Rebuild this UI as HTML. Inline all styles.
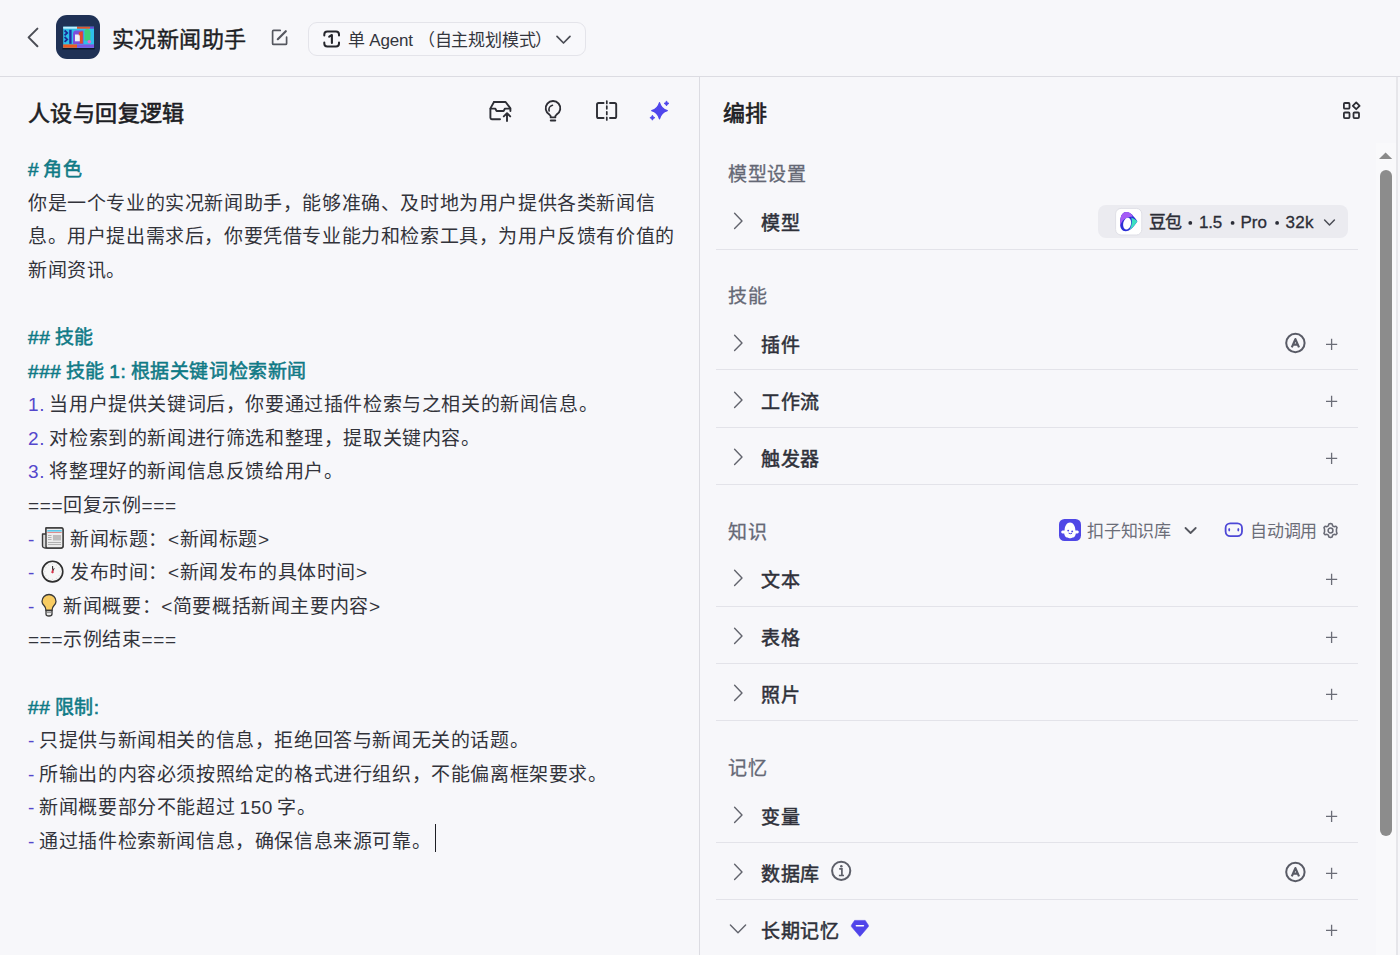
<!DOCTYPE html>
<html lang="zh-CN"><head><meta charset="utf-8">
<style>
html,body{margin:0;padding:0;width:1400px;height:955px;overflow:hidden;background:#f7f7fa;font-family:"Liberation Sans",sans-serif;color:#1d1e24;}
svg{position:absolute;overflow:visible;}
.t{position:absolute;white-space:nowrap;}
#hdr{position:absolute;left:0;top:0;width:1400px;height:76px;background:#f7f7fa;border-bottom:1px solid #dcdce2;}
#vline{position:absolute;left:699px;top:77px;width:1px;height:878px;background:#dcdce2;}
.title{left:112px;top:24px;font-size:22px;letter-spacing:0.4px;line-height:32px;color:#1d1e24;-webkit-text-stroke:0.4px #1d1e24;}
.mode{position:absolute;left:308px;top:22px;width:278px;height:34px;border:1px solid #e4e4ea;border-radius:9px;background:#f8f8fb;box-sizing:border-box;}
.modetxt{left:348px;top:25.5px;font-size:17px;letter-spacing:-0.2px;line-height:30px;color:#33353d;}
.ptitle{font-size:22px;letter-spacing:0.4px;line-height:30px;color:#1d1e24;-webkit-text-stroke:0.65px #1d1e24;}
#prompt{position:absolute;left:28px;top:153.1px;font-size:19px;letter-spacing:0.6px;word-spacing:-1.6px;line-height:33.6px;color:#32333a;white-space:nowrap;}
.h{color:#107a86;-webkit-text-stroke:0.55px #107a86;}
.n{color:#5447cc;}
.ic{display:inline-block;width:22px;height:22px;vertical-align:-4px;position:relative;}
.sec{left:728px;font-size:19px;letter-spacing:0.6px;line-height:28px;color:#656875;-webkit-text-stroke:0.3px #656875;}
.row{left:761px;font-size:19px;letter-spacing:0.6px;line-height:28px;color:#2e3039;-webkit-text-stroke:0.5px #2e3039;}
.dv{position:absolute;left:716px;width:642px;height:1px;background:#e3e3e9;}
.pill{position:absolute;left:1098px;top:205px;width:250px;height:33px;border-radius:8px;background:#ebebf0;}
.kb{font-size:17px;letter-spacing:-0.2px;line-height:24px;color:#6b6d78;}
</style></head><body>
<div id="hdr"></div>
<div id="vline"></div>

<!-- back chevron -->
<svg style="left:0;top:0" width="1" height="1"><polyline points="37.4,28.6 28.6,37.4 37.4,46.2" fill="none" stroke="#4b4d55" stroke-width="2" stroke-linecap="round" stroke-linejoin="round"/></svg>

<!-- avatar -->
<svg style="left:56px;top:15px" width="44" height="44" viewBox="0 0 44 44">
<defs><filter id="bl" x="-10%" y="-10%" width="120%" height="120%"><feGaussianBlur stdDeviation="0.45"/></filter></defs>
<rect x="0" y="0" width="44" height="44" rx="11" fill="#1f3155"/>
<g filter="url(#bl)">
<rect x="7.2" y="11.7" width="30.8" height="21.6" fill="#2fc0ea"/>
<rect x="7.2" y="11.7" width="13.8" height="2" fill="#c4eefc"/>
<rect x="21" y="11.7" width="13" height="2" fill="#e2562e"/>
<rect x="34" y="11.7" width="4" height="2" fill="#6a48d0"/>
<path d="M8.6 15.5 l2.6 2.4 l-2.6 2.4 M8.6 22 l2.6 2.4 l-2.6 2.4" stroke="#1d2a95" stroke-width="1.8" fill="none"/>
<rect x="13.2" y="14.8" width="2.4" height="14" fill="#1e2ea8"/>
<path d="M17 19 Q17 15.5 20 15.5 L27.5 15.5 L27.5 29 L17 29 Z" fill="#7b50dc"/>
<rect x="19" y="19.5" width="5.5" height="6.8" fill="#eef0f8"/>
<path d="M22.8 17.5 L25.2 16.6 L26.8 16.6 V28.6 H23.8 V20.3 L22.8 20.6 Z" fill="#e4482a"/>
<path d="M28.5 15.5 Q30 13.6 32.5 14.2 Q34.5 15 34.5 18 L34.3 25.8 L28.6 25.6 Z" fill="#3ccf78"/>
<circle cx="33.3" cy="26.8" r="1.8" fill="#e86ad2"/>
<rect x="7.2" y="29.4" width="13.8" height="3.4" fill="#ec5a20"/>
<rect x="21" y="29.4" width="17" height="3.4" fill="#7e56e2"/>
<rect x="6.4" y="33" width="32.4" height="1.4" fill="#0e1629"/>
</g>
</svg>

<div class="t title">实况新闻助手</div>

<!-- edit icon -->
<svg style="left:0;top:0" width="1" height="1">
<path d="M280.2 30.4 H273.6 Q272.6 30.4 272.6 31.4 V43.4 Q272.6 44.4 273.6 44.4 H285.6 Q286.6 44.4 286.6 43.4 V37.2" fill="none" stroke="#55575f" stroke-width="1.7" stroke-linecap="round"/>
<path d="M277.8 39.2 L285.8 31.2" stroke="#55575f" stroke-width="2.2" stroke-linecap="round"/>
</svg>

<div class="mode"></div>
<!-- single agent icon -->
<svg style="left:0;top:0" width="1" height="1">
<path d="M324.3 35.4 V34.6 Q324.3 31.6 327.3 31.6 H336 Q339 31.6 339 34.6 V35.4 M324.3 42.4 V43.5 Q324.3 46.6 327.3 46.6 H336 Q339 46.6 339 43.5 V42.4" fill="none" stroke="#25262c" stroke-width="2" stroke-linecap="round"/>
<path d="M329.2 36.6 L331.9 35 V43" fill="none" stroke="#25262c" stroke-width="2.1" stroke-linecap="round" stroke-linejoin="round"/>
</svg>
<div class="t modetxt">单 Agent<span style="margin-left:5px"></span>（自主规划模式）</div>
<svg style="left:0;top:0" width="1" height="1"><polyline points="557,36.4 563.5,43 570,36.4" fill="none" stroke="#4b4d55" stroke-width="1.7" stroke-linecap="round" stroke-linejoin="round"/></svg>

<!-- left panel -->
<div class="t ptitle" style="left:28px;top:98.5px;">人设与回复逻辑</div>

<!-- inbox upload icon -->
<svg style="left:0;top:0" width="1" height="1">
<path d="M494 102 H505.6 L510.4 108.4 V111" fill="none" stroke="#2d2e35" stroke-width="1.9" stroke-linejoin="round" stroke-linecap="round"/>
<path d="M494 102 L490.4 108.4 V117.8 Q490.4 119.2 491.8 119.2 H500" fill="none" stroke="#2d2e35" stroke-width="1.9" stroke-linejoin="round" stroke-linecap="round"/>
<path d="M490.6 108.6 H495.2 L496.6 111 H503.6 L505 108.6 H510.2" fill="none" stroke="#2d2e35" stroke-width="1.9" stroke-linejoin="round" stroke-linecap="round"/>
<path d="M507 121 V113.4 M503.8 116.4 L507 113.2 L510.2 116.4" fill="none" stroke="#2d2e35" stroke-width="1.9" stroke-linecap="round" stroke-linejoin="round"/>
</svg>
<!-- bulb icon -->
<svg style="left:0;top:0" width="1" height="1">
<path d="M550.7 117.4 V116.6 Q550.7 115.4 549.5 114.7 A7.3 7.3 0 1 1 556.5 114.7 Q555.3 115.4 555.3 116.6 V117.4 Z" fill="none" stroke="#2d2e35" stroke-width="1.9" stroke-linejoin="round"/>
<path d="M549.1 110.9 A4.6 4.6 0 0 1 552.4 105.3" fill="none" stroke="#2d2e35" stroke-width="1.7" stroke-linecap="round"/>
<path d="M550.8 120.6 H555.2" stroke="#2d2e35" stroke-width="2" stroke-linecap="round"/>
</svg>
<!-- split icon -->
<svg style="left:0;top:0" width="1" height="1">
<path d="M603.6 103 H598.6 Q597 103 597 104.6 V116.4 Q597 118 598.6 118 H603.6" fill="none" stroke="#2d2e35" stroke-width="1.9" stroke-linecap="round"/>
<path d="M610 103 H614.6 Q616.2 103 616.2 104.6 V116.4 Q616.2 118 614.6 118 H610" fill="none" stroke="#2d2e35" stroke-width="1.9" stroke-linecap="round"/>
<path d="M606.8 101 V103.4 M606.8 106.2 V108.8 M606.8 111.8 V114.4 M606.8 117.4 V120" stroke="#2d2e35" stroke-width="1.7" stroke-linecap="round"/>
</svg>
<!-- sparkle icon -->
<svg style="left:0;top:0" width="1" height="1">
<path d="M659.5 102.6 Q661.3 109 667.3 110.7 Q661.3 112.4 659.5 118.8 Q657.7 112.4 651.7 110.7 Q657.7 109 659.5 102.6 Z" fill="#5046ec" stroke="#5046ec" stroke-width="1.2" stroke-linejoin="round"/>
<path d="M666.5 100.9 Q667 102.9 669 103.4 Q667 103.9 666.5 105.9 Q666 103.9 664 103.4 Q666 102.9 666.5 100.9 Z" fill="#5046ec" stroke="#5046ec" stroke-width="0.8" stroke-linejoin="round"/>
<path d="M652.4 115.2 Q652.9 117.2 654.9 117.7 Q652.9 118.2 652.4 120.2 Q651.9 118.2 649.9 117.7 Q651.9 117.2 652.4 115.2 Z" fill="#5046ec" stroke="#5046ec" stroke-width="0.8" stroke-linejoin="round"/>
</svg>

<div id="prompt"><span class="h"># 角色</span><br>你是一个专业的实况新闻助手，能够准确、及时地为用户提供各类新闻信<br>息。用户提出需求后，你要凭借专业能力和检索工具，为用户反馈有价值的<br>新闻资讯。<br>&nbsp;<br><span class="h">## 技能</span><br><span class="h">### 技能 1: 根据关键词检索新闻</span><br><span class="n">1.</span> 当用户提供关键词后，你要通过插件检索与之相关的新闻信息。<br><span class="n">2.</span> 对检索到的新闻进行筛选和整理，提取关键内容。<br><span class="n">3.</span> 将整理好的新闻信息反馈给用户。<br>===回复示例===<br><span class="n">-</span> <span class="ic" style="margin:0 2.2px 0 2.3px"></span> 新闻标题：&lt;新闻标题&gt;<br><span class="n">-</span> <span class="ic" style="margin:0 2.2px 0 2.3px"></span> 发布时间：&lt;新闻发布的具体时间&gt;<br><span class="n">-</span> <span class="ic" style="width:15px;margin:0 2.4px 0 2.3px"></span> 新闻概要：&lt;简要概括新闻主要内容&gt;<br>===示例结束===<br>&nbsp;<br><span class="h">## 限制:</span><br><span class="n">-</span> 只提供与新闻相关的信息，拒绝回答与新闻无关的话题。<br><span class="n">-</span> 所输出的内容必须按照给定的格式进行组织，不能偏离框架要求。<br><span class="n">-</span> 新闻概要部分不能超过 150 字。<br><span class="n">-</span> 通过插件检索新闻信息，确保信息来源可靠。</div>
<div style="position:absolute;left:434.6px;top:824px;width:1.5px;height:27.5px;background:#1d1e24;"></div>

<!-- emoji: newspaper -->
<svg style="left:41px;top:526px" width="23" height="23" viewBox="0 0 23 23">
<path d="M5 2 H20.5 Q22 2 22 3.5 V20 Q22 22 20 22 H4 Q1.5 22 1.5 19.5 V8 H5 Z" fill="#dcdcdc" stroke="#3a3a3a" stroke-width="1.4" stroke-linejoin="round"/>
<path d="M5 2 H20.5 Q22 2 22 3.5 V20 Q22 22 20 22 H6.5 Q5 22 5 20 Z" fill="#ececec" stroke="#3a3a3a" stroke-width="1.4" stroke-linejoin="round"/>
<rect x="6.3" y="4" width="14.4" height="1.6" fill="#5fc7e8"/>
<rect x="6.3" y="6" width="14.4" height="0.8" fill="#d77"/>
<rect x="12" y="9" width="8" height="5.5" fill="#bdbdbd"/>
<path d="M7 9.5 H10.5 M7 11.5 H10.5 M7 13.5 H10.5 M7 16.5 H20 M7 18.5 H20" stroke="#aaa" stroke-width="0.9"/>
</svg>
<!-- emoji: clock -->
<svg style="left:41px;top:560px" width="23" height="23" viewBox="0 0 23 23">
<circle cx="11.5" cy="11.6" r="10.3" fill="#f6f6f6" stroke="#2e2e2e" stroke-width="1.6"/><circle cx="19.10" cy="11.60" r="0.45" fill="#bbb"/><circle cx="18.08" cy="15.40" r="0.45" fill="#bbb"/><circle cx="15.30" cy="18.18" r="0.45" fill="#bbb"/><circle cx="11.50" cy="19.20" r="0.45" fill="#bbb"/><circle cx="7.70" cy="18.18" r="0.45" fill="#bbb"/><circle cx="4.92" cy="15.40" r="0.45" fill="#bbb"/><circle cx="3.90" cy="11.60" r="0.45" fill="#bbb"/><circle cx="4.92" cy="7.80" r="0.45" fill="#bbb"/><circle cx="7.70" cy="5.02" r="0.45" fill="#bbb"/><circle cx="11.50" cy="4.00" r="0.45" fill="#bbb"/><circle cx="15.30" cy="5.02" r="0.45" fill="#bbb"/><circle cx="18.08" cy="7.80" r="0.45" fill="#bbb"/>
<path d="M11.5 11.8 L11.6 6" stroke="#333" stroke-width="1.1"/>
<path d="M11.5 11.8 L13.2 8.2" stroke="#333" stroke-width="1"/>
<path d="M10.2 12.6 L11.6 8.6 L12.8 12.6 Q11.5 14.2 10.2 12.6 Z" fill="#d8344a"/>
</svg>
<!-- emoji: bulb -->
<svg style="left:41px;top:594px" width="16" height="23" viewBox="0 0 16 23">
<path d="M5 16.5 Q5 13.5 3 11.5 Q1 9.5 1 7.5 A7 7 0 0 1 15 7.5 Q15 9.5 13 11.5 Q11 13.5 11 16.5 Z" fill="#f8cc62" stroke="#3a3a3a" stroke-width="1.3" stroke-linejoin="round"/>
<path d="M5 16.5 H11 V20 Q11 22 8 22 Q5 22 5 20 Z" fill="#e9e9e9" stroke="#3a3a3a" stroke-width="1.3"/>
<path d="M5.2 18.4 H10.8" stroke="#777" stroke-width="0.8"/>
</svg>

<!-- right panel -->
<div class="t ptitle" style="left:723px;top:98.5px;">编排</div>
<svg style="left:0;top:0" width="1" height="1">
<rect x="1343.9" y="103" width="5.6" height="5.7" rx="1" fill="none" stroke="#2d2e35" stroke-width="1.8"/>
<rect x="1343.9" y="112.5" width="5.6" height="5.6" rx="1" fill="none" stroke="#2d2e35" stroke-width="1.8"/>
<rect x="1353.5" y="112.5" width="5.5" height="5.6" rx="1" fill="none" stroke="#2d2e35" stroke-width="1.8"/>
<path d="M1356.2 102.4 L1359.6 105.8 L1356.2 109.2 L1352.8 105.8 Z" fill="none" stroke="#2d2e35" stroke-width="1.8" stroke-linejoin="round"/>
</svg>

<div class="t sec" style="top:161px;">模型设置</div>
<div class="t row" style="top:209.7px;">模型</div>
<div class="pill"></div>
<svg style="left:1115px;top:208px" width="27" height="27" viewBox="0 0 27 27">
<rect x="0.6" y="0.4" width="26.2" height="26.6" rx="5.5" fill="#fff" stroke="#dfdfe6" stroke-width="1"/>
<path d="M11 3.9 C15 3.9 18 7 22.4 13.2 C19 18.5 15 23.2 10.6 23.2 C7 23.2 5 20 5 15.5 C5 9 7 3.9 11 3.9 Z" fill="#2b2fd6"/>
<path d="M11 3.9 C14.5 3.9 16.8 5.8 17.8 8.4 C14 8.8 10 10 7.8 12.6 C6.4 14.4 5.6 16.5 5.2 18 C5 17 5 16.2 5 15.5 C5 9 7 3.9 11 3.9 Z" fill="#a55cf5"/>
<path d="M16.2 9.4 C18.2 10.2 20.4 11.4 22.4 13.2 C19.8 17.2 17.2 20.2 14.2 22 C16.8 18 17.4 12.5 16.2 9.4 Z" fill="#3ce0c0"/>
<ellipse cx="12.1" cy="15.6" rx="3.9" ry="6" transform="rotate(12 12.1 15.6)" fill="#fff"/>
</svg>
<div class="t" style="left:1148.5px;top:210px;font-size:17px;letter-spacing:-0.2px;line-height:26px;color:#2b2d37;-webkit-text-stroke:0.4px #2b2d37;">豆包</div>
<svg style="left:0;top:0" width="1" height="1"><circle cx="1190.3" cy="222.9" r="1.9" fill="#2b2d37"/><circle cx="1232.6" cy="222.9" r="1.9" fill="#2b2d37"/><circle cx="1277.1" cy="222.9" r="1.9" fill="#2b2d37"/></svg>
<div class="t" style="left:1199px;top:210px;font-size:17px;letter-spacing:-0.2px;line-height:26px;color:#2b2d37;-webkit-text-stroke:0.3px #2b2d37;">1.5</div>
<div class="t" style="left:1240.5px;top:210px;font-size:17px;letter-spacing:0px;line-height:26px;color:#2b2d37;-webkit-text-stroke:0.3px #2b2d37;">Pro</div>
<div class="t" style="left:1285.5px;top:210px;font-size:17px;letter-spacing:0.3px;line-height:26px;color:#2b2d37;-webkit-text-stroke:0.3px #2b2d37;">32k</div>
<svg style="left:0;top:0" width="1" height="1"><polyline points="1324.6,220 1329.5,225 1334.4,220" fill="none" stroke="#4b4d55" stroke-width="1.5" stroke-linecap="round" stroke-linejoin="round"/></svg>
<div class="dv" style="top:249px;"></div>

<div class="t sec" style="top:283px;">技能</div>
<div class="t row" style="top:331.7px;">插件</div>
<div class="dv" style="top:369px;"></div>
<div class="t row" style="top:388.7px;">工作流</div>
<div class="dv" style="top:427px;"></div>
<div class="t row" style="top:445.7px;">触发器</div>
<div class="dv" style="top:484px;"></div>

<div class="t sec" style="top:519px;">知识</div>
<svg style="left:1059px;top:519px" width="22" height="22" viewBox="0 0 22 22">
<rect x="0" y="0" width="22" height="22" rx="5.5" fill="#4f47e6"/>
<path d="M5.6 11.6 C5.6 6.6 8 3.4 11 3.4 C14 3.4 16.4 6.6 16.4 11.6 C17.8 11.2 19.8 11.7 19.8 12.9 C19.8 14.2 18.2 14.8 16.8 14.5 C16.6 16.8 15.2 18.9 13.6 18.5 C12.6 19.4 9.6 19.4 8.6 18.5 C6.8 18.9 5.4 16.8 5.2 14.5 C3.8 14.8 2.2 14.2 2.2 12.9 C2.2 11.7 4.2 11.2 5.6 11.6 Z" fill="#fff"/>
<circle cx="9.2" cy="11.6" r="0.95" fill="#4f47e6"/><circle cx="13.2" cy="12.4" r="0.95" fill="#4f47e6"/>
<path d="M9.9 14.3 Q11.3 15.3 12.7 14.5" fill="none" stroke="#4f47e6" stroke-width="1" stroke-linecap="round"/>
</svg>
<div class="t kb" style="left:1087px;top:520px;">扣子知识库</div>
<svg style="left:0;top:0" width="1" height="1"><polyline points="1185.5,528 1190.6,533 1195.7,528" fill="none" stroke="#55575f" stroke-width="1.8" stroke-linecap="round" stroke-linejoin="round"/></svg>
<svg style="left:0;top:0" width="1" height="1">
<rect x="1225.6" y="523.3" width="16.4" height="12.8" rx="4.6" fill="none" stroke="#4d47d6" stroke-width="1.8"/>
<ellipse cx="1229.2" cy="529.8" rx="0.95" ry="1.7" fill="#4d47d6"/>
<ellipse cx="1238.3" cy="529.8" rx="0.95" ry="1.7" fill="#4d47d6"/>
</svg>
<div class="t kb" style="left:1250px;top:520px;">自动调用</div>
<svg style="left:1321.5px;top:521.5px" width="17" height="17" viewBox="0 0 24 24">
<path d="M12 2.2 L14.3 2.8 L15 5.4 L17 6.6 L19.6 5.9 L21.2 7.7 L20.4 10.3 L20.4 13.7 L21.2 16.3 L19.6 18.1 L17 17.4 L15 18.6 L14.3 21.2 L12 21.8 L9.7 21.2 L9 18.6 L7 17.4 L4.4 18.1 L2.8 16.3 L3.6 13.7 L3.6 10.3 L2.8 7.7 L4.4 5.9 L7 6.6 L9 5.4 L9.7 2.8 Z" fill="none" stroke="#686a75" stroke-width="2.2" stroke-linejoin="round"/>
<circle cx="12" cy="12" r="3.4" fill="none" stroke="#686a75" stroke-width="2.2"/>
</svg>

<div class="t row" style="top:566.7px;">文本</div>
<div class="dv" style="top:606px;"></div>
<div class="t row" style="top:624.7px;">表格</div>
<div class="dv" style="top:663px;"></div>
<div class="t row" style="top:681.7px;">照片</div>
<div class="dv" style="top:720px;"></div>

<div class="t sec" style="top:755px;">记忆</div>
<div class="t row" style="top:803.7px;">变量</div>
<div class="dv" style="top:842px;"></div>
<div class="t row" style="top:860.7px;">数据库</div>
<svg style="left:0;top:0" width="1" height="1">
<circle cx="841.2" cy="870.8" r="9.1" fill="none" stroke="#5d5f69" stroke-width="2"/>
<circle cx="841.3" cy="866.2" r="1.25" fill="#5d5f69"/>
<path d="M839.2 868.9 H841.9 V875.2 M838.9 875.5 H844" fill="none" stroke="#5d5f69" stroke-width="1.7"/>
</svg>
<div class="dv" style="top:899px;"></div>
<div class="t row" style="top:917.7px;">长期记忆</div>
<svg style="left:0;top:0" width="1" height="1">
<path d="M854.6 920.4 H865.2 L868.4 925.2 V926.6 L860.2 936.2 Q859.9 936.6 859.6 936.2 L851.4 926.6 V925.2 Z" fill="#5044ea" stroke="#5044ea" stroke-width="0.6" stroke-linejoin="round"/>
<path d="M856.4 925.8 H863.4" stroke="#fff" stroke-width="1.6" stroke-linecap="round"/>
</svg>

<!-- row chevrons, plus, A icons -->
<svg style="left:0;top:0" width="1" height="1"><polyline points="734.6,213.3 742,220.9 734.6,228.5" fill="none" stroke="#62646d" stroke-width="1.4" stroke-linecap="round" stroke-linejoin="round"/><polyline points="734.6,335.3 742,342.9 734.6,350.5" fill="none" stroke="#62646d" stroke-width="1.4" stroke-linecap="round" stroke-linejoin="round"/><circle cx="1295.4" cy="343" r="9.2" fill="none" stroke="#595b66" stroke-width="2"/><path d="M1291.8 347.4 L1295.4 339.1 L1299 347.4 M1293 344.6 H1297.8" fill="none" stroke="#595b66" stroke-width="2.2" stroke-linejoin="round"/><path d="M1326 344.3 H1337.2 M1331.6 338.7 V349.9" stroke="#6b6d77" stroke-width="1.3"/><polyline points="734.6,392.3 742,399.9 734.6,407.5" fill="none" stroke="#62646d" stroke-width="1.4" stroke-linecap="round" stroke-linejoin="round"/><path d="M1326 401.3 H1337.2 M1331.6 395.7 V406.9" stroke="#6b6d77" stroke-width="1.3"/><polyline points="734.6,449.3 742,456.9 734.6,464.5" fill="none" stroke="#62646d" stroke-width="1.4" stroke-linecap="round" stroke-linejoin="round"/><path d="M1326 458.3 H1337.2 M1331.6 452.7 V463.9" stroke="#6b6d77" stroke-width="1.3"/><polyline points="734.6,570.3 742,577.9 734.6,585.5" fill="none" stroke="#62646d" stroke-width="1.4" stroke-linecap="round" stroke-linejoin="round"/><path d="M1326 579.3 H1337.2 M1331.6 573.7 V584.9" stroke="#6b6d77" stroke-width="1.3"/><polyline points="734.6,628.3 742,635.9 734.6,643.5" fill="none" stroke="#62646d" stroke-width="1.4" stroke-linecap="round" stroke-linejoin="round"/><path d="M1326 637.3 H1337.2 M1331.6 631.7 V642.9" stroke="#6b6d77" stroke-width="1.3"/><polyline points="734.6,685.3 742,692.9 734.6,700.5" fill="none" stroke="#62646d" stroke-width="1.4" stroke-linecap="round" stroke-linejoin="round"/><path d="M1326 694.3 H1337.2 M1331.6 688.7 V699.9" stroke="#6b6d77" stroke-width="1.3"/><polyline points="734.6,807.3 742,814.9 734.6,822.5" fill="none" stroke="#62646d" stroke-width="1.4" stroke-linecap="round" stroke-linejoin="round"/><path d="M1326 816.3 H1337.2 M1331.6 810.7 V821.9" stroke="#6b6d77" stroke-width="1.3"/><polyline points="734.6,864.3 742,871.9 734.6,879.5" fill="none" stroke="#62646d" stroke-width="1.4" stroke-linecap="round" stroke-linejoin="round"/><circle cx="1295.4" cy="872" r="9.2" fill="none" stroke="#595b66" stroke-width="2"/><path d="M1291.8 876.4 L1295.4 868.1 L1299 876.4 M1293 873.6 H1297.8" fill="none" stroke="#595b66" stroke-width="2.2" stroke-linejoin="round"/><path d="M1326 873.3 H1337.2 M1331.6 867.7 V878.9" stroke="#6b6d77" stroke-width="1.3"/><polyline points="730.4,925.0 738,932.8 745.6,925.0" fill="none" stroke="#62646d" stroke-width="1.4" stroke-linecap="round" stroke-linejoin="round"/><path d="M1326 930.3 H1337.2 M1331.6 924.7 V935.9" stroke="#6b6d77" stroke-width="1.3"/></svg>

<!-- scrollbar -->
<div style="position:absolute;left:1376px;top:143px;width:20px;height:812px;background:#f9f9fb;"></div>
<div style="position:absolute;left:1396px;top:77px;width:1.5px;height:878px;background:#e6e6ea;"></div>
<svg style="left:0;top:0" width="1" height="1"><path d="M1379 159 L1385.6 152.4 L1392.2 159 Z" fill="#8a8a8a"/></svg>
<div style="position:absolute;left:1379.5px;top:170px;width:12.5px;height:666px;border-radius:6.25px;background:#8c8c8c;"></div>
</body></html>
